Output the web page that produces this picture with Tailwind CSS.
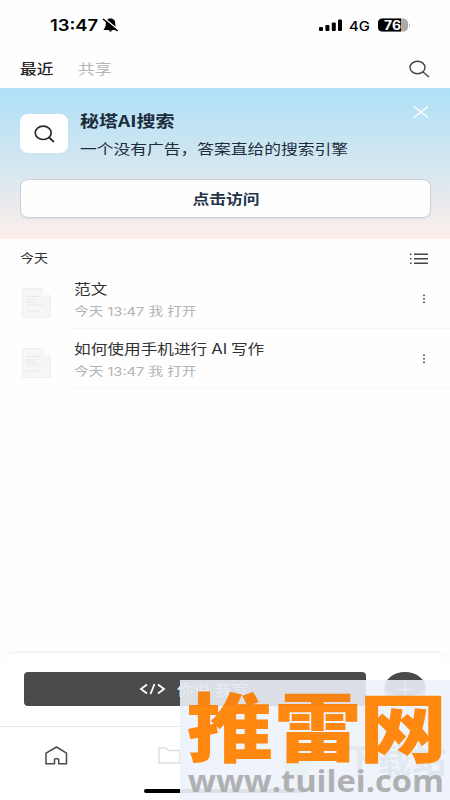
<!DOCTYPE html>
<html lang="zh-CN">
<head>
<meta charset="utf-8">
<meta name="viewport" content="width=device-width, initial-scale=1">
<title>最近</title>
<script src="https://cdn.jsdelivr.net/npm/@tailwindcss/browser@4"></script>
</head>
<body class="bg-white">
<div class="relative flex h-[800px] w-[450px] flex-col overflow-hidden bg-[#fefefe] font-[Inter,'Noto_Sans_CJK_SC',sans-serif] whitespace-nowrap text-[#333]">
  <!-- status bar -->
  <header class="flex h-[50px] shrink-0 items-center pl-[50px] pr-[39px] text-black">
    <span class="w-[52px]"><span class="inline-block origin-left scale-x-[1.15] text-[16px] leading-5 font-semibold">13:47</span></span>
    <svg class="h-[15px] w-[17px]" viewBox="0 0 17 15"><path d="M8.500 .5C5 .5 3.800 3 3.800 5.500C3.800 8.500 3 9.500 1.500 12H15.500C14 9.500 13.200 8.500 13.200 5.500C13.200 3 12 .5 8.500 .5Z M6.500 12.300H10.500Q8.500 15 6.500 12.300Z"/><path d="M2.500 .5L17 12.500" stroke="#fff" stroke-width="1.500"/><path d="M1 1L15.500 13" stroke="#000" stroke-width="1.500"/></svg>
    <svg class="ml-auto h-[13px] w-[24px]" viewBox="0 0 24 13"><rect x="0" y="8" width="4" height="4" rx="1"/><rect x="6.400" y="6" width="4" height="6" rx="1"/><rect x="12.800" y="3.500" width="4" height="8.500" rx="1"/><rect x="19" y="0.500" width="4" height="11.500" rx="1"/></svg>
    <span class="ml-[6px] w-[29px]"><span class="inline-block origin-left scale-x-[1.14] text-[13px] leading-5 font-medium">4G</span></span>
    <svg class="h-[14px] w-[33px]" viewBox="0 0 33 14"><rect x="0" y="0.500" width="30" height="13" rx="4.500" fill="#aaa"/><path d="M4.500 .5H23V13.500H4.500Q0 13.500 0 9V5Q0 .5 4.500 .5Z"/><path d="M31 5Q33 7 31 9Z" fill="#aaa"/><text x="6" y="11.500" fill="#fff" font-family="Inter" font-size="12.500" font-weight="700" textLength="17" lengthAdjust="spacingAndGlyphs">76</text></svg>
  </header>
  <!-- tabs -->
  <nav class="flex h-[38px] shrink-0 items-center pl-[19.500px] pr-[20.500px] text-[14px] leading-5">
    <span class="w-[58px]"><span class="inline-block origin-left scale-x-[1.19] font-medium text-[#222]">最近</span></span>
    <span class="inline-block origin-left scale-x-[1.19] text-[#b5b5b5]">共享</span>
    <svg class="ml-auto h-[18px] w-[21px]" viewBox="0 0 21 18" fill="none" stroke="#444" stroke-width="1.400"><ellipse cx="8.500" cy="7.500" rx="7.500" ry="6.200"/><path d="M14 12L20 17"/></svg>
  </nav>
  <!-- banner -->
  <section class="relative h-[150.500px] shrink-0 bg-linear-to-b from-[#aee0f8] via-[#d3e6f0] to-[#fdeeea] px-5 pt-[24px]">
    <div class="flex">
      <div class="mt-[2px] flex h-[39px] w-12 items-center justify-center rounded-[8px] bg-white"><svg class="h-[18px] w-[21px]" viewBox="0 0 21 18" fill="none" stroke="#222c35" stroke-width="1.700"><ellipse cx="9.200" cy="7.800" rx="8" ry="6.700"/><path d="M15 12.500L19.500 16.500" stroke-linecap="round"/></svg></div>
      <div class="-mt-px ml-3 text-[#1d2c3c]">
        <div class="origin-left scale-x-[1.19] font-['Noto_Sans_CJK_SC',sans-serif] text-[16px] leading-[18px] font-bold">秘塔AI搜索</div>
        <div class="mt-[10px] origin-left scale-x-[1.197] text-[14px] leading-5">一个没有广告，答案直给的搜索引擎</div>
      </div>
    </div>
    <svg class="absolute top-[18px] left-[413px] h-3 w-4" viewBox="0 0 16 12" fill="none" stroke="#fff" stroke-width="1.400"><path d="M1 .5L15 11.500M15 .5L1 11.500"/></svg>
    <button class="mt-[20px] flex h-[39px] w-[411px] items-center justify-center rounded-[8px] border border-[#c9d2da] bg-[#fefefe] text-[14px] font-bold text-[#24344a] shadow-[0_1px_1px_#0001]"><span class="scale-x-[1.2]">点击访问</span></button>
  </section>
  <!-- recent documents -->
  <main class="min-h-0 flex-1">
    <div class="flex h-[30px] items-center justify-between pt-[10px] pl-5 pr-[22px]"><span class="origin-left scale-x-[1.17] text-[12px]">今天</span><svg class="h-3 w-[18px]" viewBox="0 0 18 12" fill="#444"><path d="M0 .5h1.500v1.500H0zM4 .5h14v1.500H4zM0 5h1.500v1.500H0zM4 5h14v1.500H4zM0 9.500h1.500V11H0zM4 9.500h14V11H4z"/></svg></div>
    <article class="flex h-[60px] pl-[22px]">
      <svg class="mt-[19px] h-[30px] w-[29px]" viewBox="0 0 29 30"><path d="M.5.500H20L28.500 8V29.500H.5Z" fill="#f6f6f6" stroke="#f0f0f0"/><path d="M20 .5V8H28.500" fill="#fdfdfd" stroke="#f0f0f0"/><path d="M5 8.500H18M5 12H14M5 14.500H16M5 17H22M5 23H18" stroke="#e6e6e6" stroke-width="1" stroke-dasharray="4 .7"/></svg>
      <div class="ml-[23px] flex flex-1 border-b border-[#f5f5f5]">
        <div class="pt-[10px]"><div class="origin-left scale-x-[1.19] text-[14px] leading-5">范文</div><div class="mt-[3px] origin-left scale-x-[1.22] text-[12px] leading-5 text-[#b3b3b3]">今天 13:47 我 打开</div></div>
        <svg class="mt-[25px] mr-[24px] ml-auto h-[10px] w-[4px]" viewBox="0 0 4 10" fill="#666"><rect x="1" y="0.500" width="2" height="1.600"/><rect x="1" y="4" width="2" height="1.600"/><rect x="1" y="7.500" width="2" height="1.600"/></svg>
      </div>
    </article>
    <article class="flex h-[60px] pl-[22px]">
      <svg class="mt-[19px] h-[30px] w-[29px]" viewBox="0 0 29 30"><path d="M.5.500H20L28.500 8V29.500H.5Z" fill="#f6f6f6" stroke="#f0f0f0"/><path d="M20 .5V8H28.500" fill="#fdfdfd" stroke="#f0f0f0"/><path d="M5 8.500H18M5 12H14M5 14.500H16M5 17H22M5 23H18" stroke="#e6e6e6" stroke-width="1" stroke-dasharray="4 .7"/></svg>
      <div class="ml-[23px] flex flex-1 border-b border-[#f5f5f5]">
        <div class="pt-[10px]"><div class="origin-left scale-x-[1.19] text-[14px] leading-5 [word-spacing:-0.7px]">如何使用手机进行 AI 写作</div><div class="mt-[3px] origin-left scale-x-[1.22] text-[12px] leading-5 text-[#b3b3b3]">今天 13:47 我 打开</div></div>
        <svg class="mt-[25px] mr-[24px] ml-auto h-[10px] w-[4px]" viewBox="0 0 4 10" fill="#666"><rect x="1" y="0.500" width="2" height="1.600"/><rect x="1" y="4" width="2" height="1.600"/><rect x="1" y="7.500" width="2" height="1.600"/></svg>
      </div>
    </article>
  </main>
  <!-- compose bar and navigation -->
  <footer class="h-[149px] shrink-0 rounded-t-[16px] border-t-2 border-[#f5f5f5] bg-white">
    <div class="flex h-[74px] items-start border-b border-[#e8e8e8] pt-[19px] pl-6">
      <button class="flex h-[34px] w-[342px] items-center rounded-[4px] bg-[#4a4a4a] pl-[115px] text-[14px] text-white"><svg class="h-3 w-[27px]" viewBox="0 0 27 12" fill="none" stroke="#fff" stroke-width="1.800"><path d="M8 1.500L2 6L8 10.500M19 1.500L25 6L19 10.500M15.500 1L11.500 11"/></svg><span class="ml-[11px] origin-left scale-x-[1.19]">你说 我写</span></button>
      <button class="ml-[18px] flex h-[34px] w-[42px] items-center justify-center rounded-[50%] bg-[#4a4a4a]"><svg class="h-[15px] w-[18px]" viewBox="0 0 18 15" stroke="#fff" stroke-width="1.400"><path d="M9 0V15M0 7.500H18"/></svg></button>
    </div>
    <div class="flex h-[57px] items-center pl-[45px]">
      <svg class="h-[19px] w-[23px]" viewBox="0 0 23 19" fill="none" stroke="#4a4a4a" stroke-width="1.500" stroke-linejoin="round"><path d="M1 7.200L11.500 1L21.500 7.200V17.800H13.700V13.500Q13.700 12.700 12.700 12.700H10.500Q9.500 12.700 9.500 13.500V17.800H1Z"/></svg>
      <svg class="ml-[90px] h-[17px] w-[23px]" viewBox="0 0 23 17" fill="none" stroke="#ddd" stroke-width="1.400" stroke-linejoin="round"><path d="M1 1H8L10.500 3.500H22V16H1Z"/></svg>
    </div>
    <div class="ml-[144px] h-[4px] w-[160px] translate-y-[5px] rounded-full bg-black"></div>
  </footer>
  <!-- site watermark -->
  <svg class="absolute top-[680px] left-[180px] h-[120px] w-[270px]" viewBox="0 0 270 120">
    <rect width="270" height="120" fill="#eef3fc" fill-opacity=".93"/>
    <g fill="#e2e8ef" font-family="'Noto Sans CJK SC',sans-serif"><ellipse cx="118" cy="82" rx="14" ry="18" fill="#e9f2f3"/><text x="163" y="93" font-size="34" font-weight="700" textLength="103" lengthAdjust="spacingAndGlyphs">下载站</text></g>
    <g fill="#ff8811" font-family="'Noto Sans CJK SC',sans-serif" font-size="81" font-weight="900"><text transform="translate(6.500 75.500) scale(1.070 .925)">推</text><text transform="translate(94 75.500) scale(1.080 .925)">雷</text><text transform="translate(179 75.500) scale(1.090 .925)">网</text></g>
    <path d="M0 0H183Q186 0 186 4V22Q186 26 182 26H0ZM205 4A21 17 0 0 0 246 4L244 0H207Z" fill="#3a2600" fill-opacity=".04"/>
    <text x="8" y="112" fill="#afb0b1" font-family="'Open Sans',sans-serif" font-size="31" font-weight="700" textLength="256" lengthAdjust="spacingAndGlyphs">www.tuilei.com</text>
  </svg>
</div>
</body>
</html>
